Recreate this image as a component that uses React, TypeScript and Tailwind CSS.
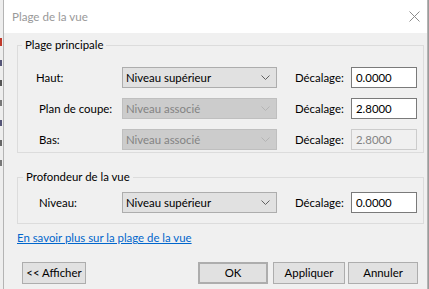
import clsx from 'clsx';

function Chevron({ disabled }: { disabled?: boolean }) {
  return (
    <svg width="9" height="5" viewBox="0 0 9 5" className="shrink-0">
      <path d="M0.5 0.5 L4.5 4.5 L8.5 0.5" fill="none" stroke={disabled ? '#b4b4b4' : '#606060'} strokeWidth="1" />
    </svg>
  );
}

function Combo({ text, disabled }: { text: string; disabled?: boolean }) {
  return (
    <div
      className={clsx(
        'flex items-center justify-between h-[21px] w-[155px] border pl-[3px] pr-[6px]',
        disabled ? 'bg-[#cccccc] border-[#bfbfbf] text-[#838383]' : 'bg-[#e1e1e1] border-[#adadad] text-black'
      )}
    >
      <span>{text}</span>
      <Chevron disabled={disabled} />
    </div>
  );
}

function Field({ value, disabled }: { value: string; disabled?: boolean }) {
  return (
    <div
      className={clsx(
        'flex items-center h-[21px] w-[66px] border pl-[4px]',
        disabled ? 'bg-[#f0f0f0] border-[#cccccc] text-[#838383]' : 'bg-white border-[#7a7a7a] text-black'
      )}
    >
      {value}
    </div>
  );
}

type RowProps = {
  label: string;
  indent: string;
  combo: string;
  value: string;
  comboOff?: boolean;
  fieldOff?: boolean;
};

function Row({ label, indent, combo, value, comboOff, fieldOff }: RowProps) {
  return (
    <div className="flex items-center h-[21px]">
      <span className={clsx('w-[104px]', indent)}>{label}</span>
      <Combo text={combo} disabled={comboOff} />
      <span className="ml-[18px] w-[56px]">Décalage:</span>
      <Field value={value} disabled={fieldOff} />
    </div>
  );
}

function Btn({ children, className }: { children: string; className?: string }) {
  return (
    <div className={clsx('flex items-center justify-center h-[22px] bg-[#e1e1e1] border border-[#adadad]', className)}>
      {children}
    </div>
  );
}

export default function App() {
  return (
    <div className="flex w-[429px] h-[289px] overflow-hidden bg-[#eeeeee] font-['Lato',sans-serif] text-[11.4px] leading-[16px] text-black">
      {/* background strip behind the dialog */}
      <div className="w-[3px] flex flex-col pt-[38px] gap-[14px]">
        <div className="h-[8px] w-[2px] bg-[#c0392b]" />
        <div className="h-[6px] w-[2px] bg-[#555577]" />
        <div className="h-[6px] w-[2px] bg-[#555555]" />
        <div className="h-[6px] w-[2px] bg-[#777777]" />
        <div className="h-[6px] w-[2px] bg-[#555577]" />
        <div className="h-[6px] w-[2px] bg-[#666666]" />
        <div className="h-[6px] w-[2px] bg-[#777777]" />
      </div>

      <div className="flex flex-col w-[425px] border-x border-[#b4b4b4] bg-[#f0f0f0]">
        {/* title bar */}
        <div className="flex items-center justify-between h-[33px] bg-white pl-[8px] pr-[7px]">
          <span className="text-[#999999] text-[11.6px]">Plage de la vue</span>
          <svg width="11" height="11" viewBox="0 0 11 11">
            <path d="M0.5 0.5 L10.5 10.5 M10.5 0.5 L0.5 10.5" stroke="#8c8c8c" strokeWidth="1" />
          </svg>
        </div>

        <fieldset className="ml-[13px] mt-[4px] w-[407px] border border-[#dcdcdc] pb-[2px]">
          <legend className="ml-[4px] px-[3px]">Plage principale</legend>
          <div className="flex flex-col gap-[10px] pt-[14px]">
            <Row label="Haut:" indent="pl-[18px]" combo="Niveau supérieur" value="0.0000" />
            <Row label="Plan de coupe:" indent="pl-[21px]" combo="Niveau associé" value="2.8000" comboOff />
            <Row label="Bas:" indent="pl-[21px]" combo="Niveau associé" value="2.8000" comboOff fieldOff />
          </div>
        </fieldset>

        <fieldset className="ml-[13px] mt-[16px] w-[407px] border border-[#dcdcdc] pb-[10px]">
          <legend className="ml-[5px] px-[3px]">Profondeur de la vue</legend>
          <div className="pt-[7px]">
            <Row label="Niveau:" indent="pl-[21px]" combo="Niveau supérieur" value="0.0000" />
          </div>
        </fieldset>

        <a className="ml-[13px] mt-[6px] self-start text-[#0066cc] underline">En savoir plus sur la plage de la vue</a>

        <div className="flex mt-[16px]">
          <Btn className="ml-[18px] w-[64px]">{'<< Afficher'}</Btn>
          <Btn className="ml-auto w-[70px] border-2 border-[#0078d7]">OK</Btn>
          <Btn className="ml-[5px] w-[72px]">Appliquer</Btn>
          <Btn className="ml-[3px] mr-[9px] w-[70px]">Annuler</Btn>
        </div>
      </div>

      <div className="w-[1px] bg-[#9a9a9a]" />
    </div>
  );
}
